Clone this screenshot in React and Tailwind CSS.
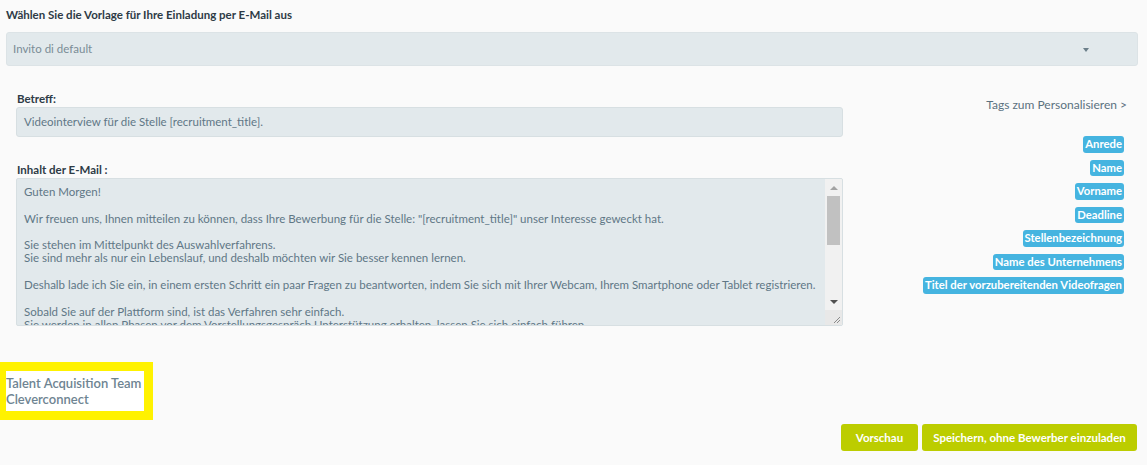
const tags = [
  "Anrede",
  "Name",
  "Vorname",
  "Deadline",
  "Stellenbezeichnung",
  "Name des Unternehmens",
  "Titel der vorzubereitenden Videofragen",
];

const body = [
  "Guten Morgen!",
  "",
  'Wir freuen uns, Ihnen mitteilen zu können, dass Ihre Bewerbung für die Stelle: "[recruitment_title]" unser Interesse geweckt hat.',
  "",
  "Sie stehen im Mittelpunkt des Auswahlverfahrens.",
  "Sie sind mehr als nur ein Lebenslauf, und deshalb möchten wir Sie besser kennen lernen.",
  "",
  "Deshalb lade ich Sie ein, in einem ersten Schritt ein paar Fragen zu beantworten, indem Sie sich mit Ihrer Webcam, Ihrem Smartphone oder Tablet registrieren.",
  "",
  "Sobald Sie auf der Plattform sind, ist das Verfahren sehr einfach.",
  "Sie werden in allen Phasen vor dem Vorstellungsgespräch Unterstützung erhalten, lassen Sie sich einfach führen.",
];

export default function App() {
  return (
    <div
      className="h-[465px] w-[1147px] overflow-hidden bg-[#fafafa] text-[11.5px] text-[#5f7786]"
      style={{ fontFamily: "Lato, 'Open Sans', sans-serif" }}
    >
      {/* TEMPLATE SELECT */}
      <div className="px-[6px] pt-[7px]">
        <p className="font-bold leading-[16px] text-[#2e3b46]">
          Wählen Sie die Vorlage für Ihre Einladung per E-Mail aus
        </p>
        <div className="mt-[9px] mr-[3px] flex h-[34px] items-center justify-between rounded-[3px] border border-[#dce3e6] bg-[#e2e9ec] pl-[6px] pr-[48px]">
          <span className="text-[#7a8c96]">Invito di default</span>
          <span className="mt-[2px] h-0 w-0 border-x-[3.5px] border-t-[4px] border-x-transparent border-t-[#6c7f8a]" />
        </div>
      </div>

      {/* FORM + TAGS */}
      <div className="mt-[26px] flex pl-[16px] pr-[20px]">
        <div className="w-[827px]">
          <p className="pl-[1px] font-bold leading-[14px] text-[#2e3b46]">Betreff:</p>
          <div className="mt-[1px] flex h-[30px] items-center rounded-[3px] border border-[#d7dfe2] bg-[#e2e9ec] px-[7px]">
            Videointerview für die Stelle [recruitment_title].
          </div>

          <p className="mt-[26px] pl-[1px] font-bold leading-[14px] text-[#2e3b46]">
            Inhalt der E-Mail :
          </p>
          <div className="relative mt-[1px] h-[148px] overflow-hidden rounded-[2px] border border-[#d7dfe2] bg-[#e2e9ec]">
            <div className="pl-[7px] pr-[24px] pt-[6px] leading-[13.3px]">
              {body.map((line, idx) => (
                <p key={idx} className="h-[13.3px] whitespace-nowrap">
                  {line}
                </p>
              ))}
            </div>
            {/* scrollbar */}
            <div className="absolute right-0 top-0 flex h-full w-[17px] flex-col bg-[#f1f1f1]">
              <div className="flex h-[17px] items-center justify-center">
                <span className="h-0 w-0 border-x-[4px] border-b-[4px] border-x-transparent border-b-[#a3a3a3]" />
              </div>
              <div className="mx-[2px] h-[49px] bg-[#c1c1c1]" />
              <div className="flex-1" />
              <div className="flex h-[17px] items-center justify-center">
                <span className="h-0 w-0 border-x-[4px] border-t-[4px] border-x-transparent border-t-[#505050]" />
              </div>
              <div className="h-[15px] bg-[#e8e8e8]" />
            </div>
            <svg className="absolute bottom-[1px] right-[1px]" width="9" height="9" viewBox="0 0 9 9">
              <path d="M8 2 L2 8 M8 5 L5 8" stroke="#8a8a8a" strokeWidth="1" />
            </svg>
          </div>
        </div>

        <div className="flex flex-1 flex-col items-end">
          <p className="mt-[4px] text-[12px] text-[#5a7180]">Tags zum Personalisieren &gt;</p>
          <div className="mt-[22px] flex flex-col items-end gap-[7px] pr-[3px]">
            {tags.map((tag) => (
              <span
                key={tag}
                className="rounded-[3px] bg-[#45b4e0] px-[2px] text-[11.3px] font-bold leading-[16.5px] text-white"
              >
                {tag}
              </span>
            ))}
          </div>
        </div>
      </div>

      {/* SIGNATURE */}
      <div className="mt-[36px] inline-block border-[9px] border-l-[6px] border-[#fff200] bg-white py-[4px] pr-[3px]">
        <p className="text-[13px] font-semibold leading-[16px] text-[#6e8492]">Talent Acquisition Team</p>
        <p className="text-[13px] font-semibold leading-[16px] text-[#6e8492]">Cleverconnect</p>
      </div>

      {/* ACTIONS */}
      <div className="mt-[4px] flex justify-end gap-[4px] pr-[10px]">
        <button
          type="button"
          className="h-[27px] w-[77px] rounded-[3px] bg-[#bccd00] text-[11.5px] font-bold text-white"
        >
          Vorschau
        </button>
        <button
          type="button"
          className="h-[27px] w-[215px] rounded-[3px] bg-[#bccd00] text-[11.5px] font-bold text-white"
        >
          Speichern, ohne Bewerber einzuladen
        </button>
      </div>
    </div>
  );
}
